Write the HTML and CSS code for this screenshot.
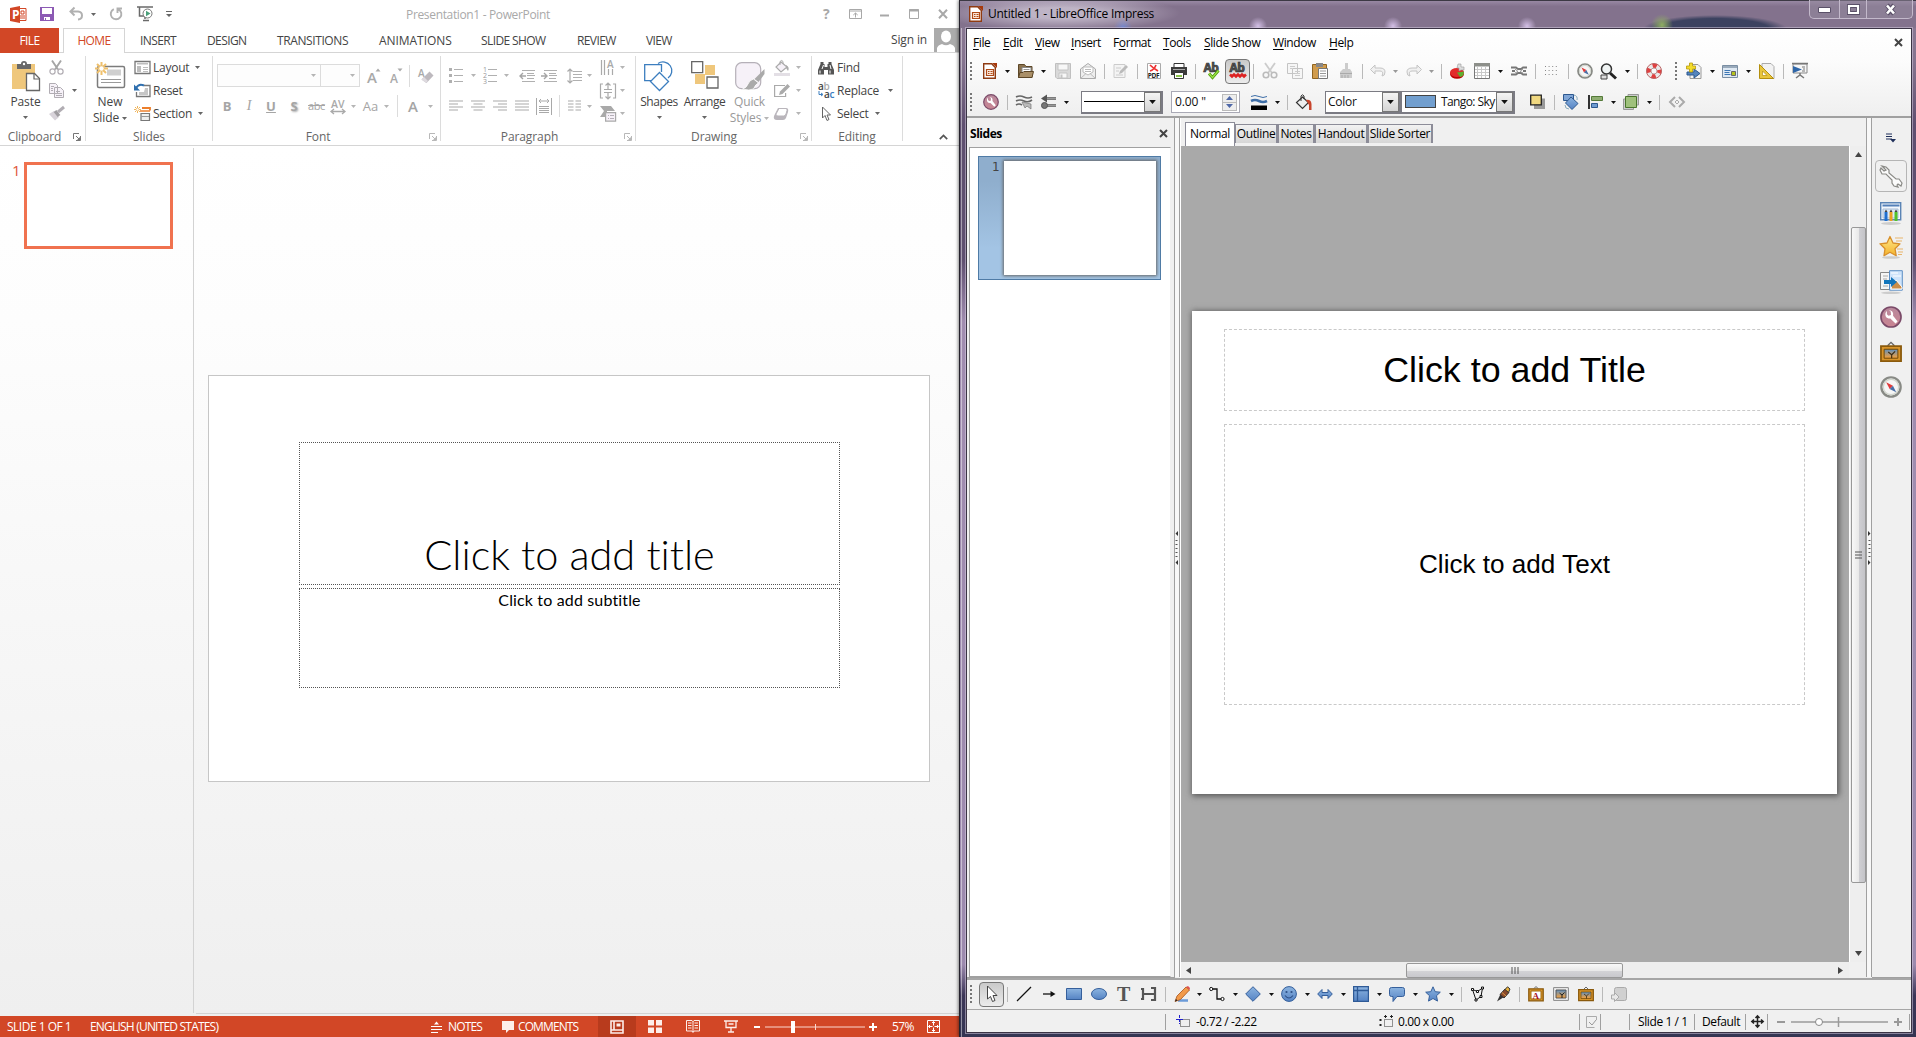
FILE: index.html
```html
<!DOCTYPE html>
<html lang="en">
<head>
<meta charset="utf-8">
<title>Presentation editors</title>
<link rel="stylesheet" href="styles.css">
</head>
<body>
<svg class="defs" width="0" height="0">
  <defs>
    <linearGradient id="blue" x1="0" y1="0" x2="0" y2="1"><stop offset="0" stop-color="#8cb4e0"/><stop offset="1" stop-color="#5583c4"/></linearGradient>
    <linearGradient id="sky" x1="0" y1="0" x2="0" y2="1"><stop offset="0" stop-color="#5d8fc0"/><stop offset="1" stop-color="#f8a13a"/></linearGradient>
    <linearGradient id="gold" x1="0" y1="0" x2="0" y2="1"><stop offset="0" stop-color="#ffe98a"/><stop offset="1" stop-color="#f4b22c"/></linearGradient>
    <linearGradient id="rose" x1="0" y1="0" x2="0" y2="1"><stop offset="0" stop-color="#b98a9d"/><stop offset="1" stop-color="#c98492"/></linearGradient>
    <symbol id="dd" viewBox="0 0 5 3"><path d="M0 0h5L2.500 3z" fill="currentColor"/></symbol>
    <symbol id="launch" viewBox="0 0 8 8"><path d="M.5 6V.5H6M7.500 3v4.500H3M3 3l4 4" fill="none" stroke="currentColor"/><path d="M7 4v3H4z" fill="currentColor"/></symbol>
    <symbol id="impress" viewBox="0 0 16 16"><path d="M1.700 .8h8l3.600 3.700v10.700H1.700z" fill="#fff" stroke="#8f3b12" stroke-width="1.400"/><path d="M10 0h5v5z" fill="#a6380b"/><path d="M4.500 6.500h7v6h-7z" fill="#fbe6d8" stroke="#b04a17" stroke-width="1.200"/><path d="M6 8.500h1.500M8.500 8.500h2M6 10.500h1.500M8.500 10.500h2" stroke="#b04a17"/></symbol>
    <symbol id="wrenchball" viewBox="0 0 16 16"><circle cx="8" cy="8" r="7.300" fill="url(#rose)" stroke="#7a4a68" stroke-width="1.200"/><path d="M5 3.500v2.500l1.200 1L8 6.500 7.800 4 6.500 3.300C8.500 2.800 10 4.500 9.500 7l3.300 4.300-1.500 1.500L7.500 9C5 9.300 3.500 7.500 4 5z" fill="#fff"/></symbol>
    <symbol id="compass" viewBox="0 0 16 16"><circle cx="8" cy="8" r="7" fill="#f6f6f6" stroke="#888a85" stroke-width="1.700"/><circle cx="8" cy="8" r="5.600" fill="none" stroke="#d3d7cf"/><path d="M4.500 4.500L9.400 7 7 9.400z" fill="#e03a3a"/><path d="M11.800 11.800L7 9.400 9.400 7z" fill="#4a6ea5"/></symbol>
    <symbol id="frame" viewBox="0 0 16 16"><path d="M5.500 3.500L8 1l2.500 2.500" fill="none" stroke="#666"/><path d="M.7 3.700h14.600v11H.7z" fill="#d8942a" stroke="#8a5a0c" stroke-width="1.300"/><path d="M3 6h10v6.500H3z" fill="url(#sky)" stroke="#6b4708" stroke-width=".7"/><path d="M8.500 12.500V10L6 8M8.500 10L11 7.500" stroke="#3a2a10" stroke-width=".8" fill="none"/></symbol>
  </defs>
</svg>
<div class="desktop">

<!-- ===== PowerPoint ===== -->
<section class="ppt">
  <header class="p-title">
    <div class="p-quick">
      <svg width="17" height="17" viewBox="0 0 17 17"><path d="M8 2.500h8v12H8z" fill="#fff" stroke="#d24726"/><path d="M11 5h3v3h-3zM10 10h5M10 12h5" fill="none" stroke="#d24726"/><path d="M0 2l10-2v17L0 15z" fill="#d24726"/><text x="2" y="12.500" class="g-p">P</text></svg>
      <svg width="14" height="14" viewBox="0 0 14 14"><path d="M0 0h14v14H0z" fill="#8c5ab4"/><path d="M2 1h10v6H2zM4 10h6v3H6v-2H5v2H4z" fill="#fff"/></svg>
      <svg width="14" height="14" viewBox="0 0 14 14"><path d="M5.500 .5L1.500 4.500l4 4M1.500 4.500H9q4 .3 4 4t-4 4" fill="none" stroke="#b1b1b1" stroke-width="2"/></svg>
      <svg class="dd c-gray" width="5" height="3"><use href="#dd"/></svg>
      <svg width="14" height="14" viewBox="0 0 14 14"><path d="M4.800 2.200A5.300 5.300 0 1 0 9.500 2.300M8.500 6V1.500H13" fill="none" stroke="#b1b1b1" stroke-width="1.900"/></svg>
      <svg width="17" height="16" viewBox="0 0 17 16"><path d="M0 1h16M2.500 1v9h5M6 14.500h6M8 13v-2" fill="none" stroke="#6a6a6a" stroke-width="1.500"/><circle cx="10.500" cy="7.500" r="4.500" fill="#fff" stroke="#777"/><path d="M9 4.800l4.500 2.700L9 10.200z" fill="#4ba07a"/></svg>
      <svg width="6" height="7" viewBox="0 0 6 7"><path d="M0 .5h6" stroke="#666"/><path d="M0 3h6L3 6z" fill="#666"/></svg>
    </div>
    <div class="p-caption">Presentation1 - PowerPoint</div>
    <div class="p-winbtns">
      <b class="q">?</b>
      <svg width="13" height="10" viewBox="0 0 13 10"><path d="M.5 .5h12v9H.5zM.5 2h12M6.500 8.500V4M4.300 6l2.200-2 2.200 2" fill="none" stroke="#a8a8a8"/></svg>
      <svg width="9" height="10" viewBox="0 0 9 10"><path d="M0 6.500h9" stroke="#a8a8a8" stroke-width="2"/></svg>
      <svg width="10" height="10" viewBox="0 0 10 10"><path d="M.5 .5h9v9h-9z" fill="none" stroke="#a8a8a8"/><path d="M0 1.500h10" stroke="#a8a8a8" stroke-width="2"/></svg>
      <svg width="10" height="10" viewBox="0 0 10 10"><path d="M1 .8l8 8.400M9 .8L1 9.200" stroke="#a8a8a8" stroke-width="2"/></svg>
    </div>
  </header>
  <nav class="p-tabs">
    <span class="file">FILE</span><span class="home">HOME</span>
    <div class="p-tablist"><span>INSERT</span><span>DESIGN</span><span class="wide">TRANSITIONS</span><span class="wider">ANIMATIONS</span><span>SLIDE SHOW</span><span>REVIEW</span><span>VIEW</span></div>
    <span class="signin">Sign in</span>
    <svg class="avatar" width="25" height="24" viewBox="0 0 25 24"><path d="M0 0h25v24H0z" fill="#ababab"/><ellipse cx="12" cy="8.500" rx="5" ry="6" fill="#fff"/><path d="M3 24v-4q1-3 5-4 4 2.500 8 0 4 1 5 4v4z" fill="#fff"/></svg>
  </nav>
  <div class="ribbon">
    <div class="grp g-clip">
      <div class="body">
        <div class="big">
          <svg width="30" height="30" viewBox="0 0 30 30"><path d="M1 3h23v25H1z" fill="#efc77c"/><path d="M6 8V3h4q0-3 3-3t3 3h4v5z" fill="#686868"/><circle cx="13" cy="3" r="1.200" fill="#fff"/><path d="M15.500 12.500h8l5 5v12h-13z" fill="#fff" stroke="#666" stroke-width="1.300"/><path d="M23 12.500v5.500h5.500" fill="none" stroke="#666" stroke-width="1.200"/></svg>
          <span>Paste</span><svg class="dd" width="5" height="3"><use href="#dd"/></svg>
        </div>
        <div class="smalls">
          <div><svg width="15" height="15" viewBox="0 0 15 15"><path d="M3 .5l6 9M12 .5l-6 9" stroke="#a5a5a5" stroke-width="1.900"/><circle cx="3.500" cy="11.500" r="2.600" fill="none" stroke="#b1adb3" stroke-width="1.200"/><circle cx="11.500" cy="11.500" r="2.600" fill="none" stroke="#b1adb3" stroke-width="1.200"/></svg></div>
          <div><svg width="15" height="15" viewBox="0 0 15 15"><path d="M.5 .5h6l2 2v8h-8zM5.500 4.500h6l3 3v7h-9z" fill="#f6f1f8" stroke="#b1adb3"/><path d="M2 3.500h3M2 5.500h2M2 7.500h2M7 8.500h4M7 10.500h6M7 12.500h6" stroke="#b1adb3"/></svg><svg class="dd c-gray" width="5" height="3"><use href="#dd"/></svg></div>
          <div><svg width="16" height="15" viewBox="0 0 16 15"><path d="M0 8l5-3 5 6-4 3.500z" fill="#d8d3da"/><path d="M6 5l4 5" stroke="#a09da1" stroke-width="3.500"/><path d="M9 6l6-5" stroke="#b1adb3" stroke-width="3"/></svg></div>
        </div>
      </div>
      <footer><span>Clipboard</span><svg class="launch" width="8" height="8"><use href="#launch"/></svg></footer>
    </div>
    <div class="grp g-slides">
      <div class="body">
        <div class="big">
          <svg width="32" height="30" viewBox="0 0 32 30"><rect x="3.500" y="5.500" width="27" height="21" rx="1.500" fill="#fff" stroke="#7c7c7c" stroke-width="1.500"/><path d="M13 8.500h14v6H13z" fill="#cfcfcf"/><path d="M7 18.500h20M7 21.500h20M7 8h2" stroke="#9a9a9a"/><path d="M7.500 1v13M1 7.500h13M3 3l9 9M12 3l-9 9" stroke="#efc06c" stroke-width="2"/><circle cx="7.500" cy="7.500" r="2.200" fill="#fff"/></svg>
          <span>New</span><span class="ddl">Slide <svg class="dd" width="5" height="3"><use href="#dd"/></svg></span>
        </div>
        <div class="smalls lab">
          <div><svg width="17" height="15" viewBox="0 0 17 15"><path d="M1 1.500h15v12H1z" fill="#fff" stroke="#777" stroke-width="1.300"/><path d="M3 3h11v1.500H3zM3 6h4v6H3z" fill="#bdbdbd"/><path d="M9 7.500h5M9 9.500h5M9 11.500h5" stroke="#bdbdbd"/></svg><span>Layout</span><svg class="dd" width="5" height="3"><use href="#dd"/></svg></div>
          <div><svg width="17" height="15" viewBox="0 0 17 15"><path d="M10 2.500h6v11H2.500V9" fill="none" stroke="#777" stroke-width="1.300"/><path d="M11 5h3v7H5V9h5z" fill="#c6c6c6"/><path d="M0 1.500v6h6z" fill="#2f6fae"/><path d="M2 5q3-5 8-2.500" fill="none" stroke="#2f6fae" stroke-width="2"/></svg><span>Reset</span></div>
          <div><svg width="17" height="16" viewBox="0 0 17 16"><path d="M8 2h8v2.500" fill="none" stroke="#ec7f2c" stroke-width="1.800"/><path d="M6 5h10" stroke="#ec7f2c" stroke-width="1.500"/><path d="M7 7.500h8.500v7H7z" fill="#eee" stroke="#777" stroke-width="1.200"/><path d="M7 10.500h8" stroke="#999"/><path d="M3.500 0v7M0 3.500h7M1 1l5 5M6 1L1 6" stroke="#efb55c"/><circle cx="3.500" cy="3.500" r="1.200" fill="#fff"/></svg><span>Section</span><svg class="dd" width="5" height="3"><use href="#dd"/></svg></div>
        </div>
      </div>
      <footer><span>Slides</span></footer>
    </div>
    <div class="grp g-font">
      <div class="rows">
        <div class="frow1">
          <span class="pcombo"><svg class="dd" width="5" height="3"><use href="#dd"/></svg></span><span class="pcombo"><svg class="dd" width="5" height="3"><use href="#dd"/></svg></span>
          <svg width="14" height="16" viewBox="0 0 14 16"><text x="0" y="14.500" class="g-a16">A</text><path d="M8.500 3.500h5L11 .5z" fill="#aaa"/></svg>
          <svg width="14" height="16" viewBox="0 0 14 16"><text x="0" y="14.500" class="g-a13">A</text><path d="M7.500 .5h5L10 3.500z" fill="#aaa"/></svg>
          <i class="vs"></i>
          <svg width="16" height="16" viewBox="0 0 16 16"><text x="0" y="9" class="g-a11">A</text><path d="M3.500 11.500l8-8 4 4-7 7.500z" fill="#bdb9be"/><path d="M3.500 11.500l2.500-2.500 4 4-2 2z" fill="#dedadf"/></svg>
        </div>
        <div class="frow2">
          <b>B</b><em>I</em><b class="u">U</b><b class="sh">S</b><span class="st">abc</span>
          <svg width="17" height="17" viewBox="0 0 17 17"><text x="1" y="10" class="g-av">AV</text><path d="M1 13.500h14M4 11l-3 2.500L4 16M12 11l3 2.500-3 2.500" fill="none" stroke="#aaa" stroke-width="1.300"/></svg>
          <svg class="dd" width="5" height="3"><use href="#dd"/></svg><span class="aa">Aa</span><svg class="dd" width="5" height="3"><use href="#dd"/></svg><i class="vs"></i><b class="fa">A</b><svg class="dd" width="5" height="3"><use href="#dd"/></svg>
        </div>
      </div>
      <footer><span>Font</span><svg class="launch c-lgray" width="8" height="8"><use href="#launch"/></svg></footer>
    </div>
    <div class="grp g-para">
      <div class="body">
        <div class="rows">
          <div class="prow1">
            <svg width="14" height="15" viewBox="0 0 14 15"><path d="M5 1.500h9M5 7.500h9M5 13.500h9" stroke="#b0b0b0"/><path d="M0 0h3v3H0zM0 6h3v3H0zM0 12h3v3H0z" fill="#b0b0b0"/></svg><svg class="dd" width="5" height="3"><use href="#dd"/></svg>
            <svg width="14" height="17" viewBox="0 0 14 17"><path d="M5 2.500h9M5 8.500h9M5 14.500h9" stroke="#b0b0b0"/><text x="0" y="5" class="g-n">1</text><text x="0" y="11" class="g-n">2</text><text x="0" y="17" class="g-n">3</text></svg><svg class="dd" width="5" height="3"><use href="#dd"/></svg>
            <svg width="16" height="12" viewBox="0 0 16 12"><path d="M3 .5h13M8 3.500h7M8 5.500h8M8 8.500h7M3 11.500h13" stroke="#b0b0b0"/><path d="M7 6H1M4 3L1 6l3 3" fill="none" stroke="#a5a5a5" stroke-width="1.400"/></svg>
            <svg width="16" height="12" viewBox="0 0 16 12"><path d="M3 .5h13M8 3.500h7M8 5.500h8M8 8.500h7M3 11.500h13" stroke="#b0b0b0"/><path d="M0 6h6M3 3l3 3-3 3" fill="none" stroke="#a5a5a5" stroke-width="1.400"/></svg>
            <svg width="15" height="16" viewBox="0 0 15 16"><path d="M6 3.500h9M6 6.500h9M6 9.500h9M6 12.500h9" stroke="#b0b0b0"/><path d="M3 1v14M.5 3.500L3 1l2.500 2.500M.5 12.500L3 15l2.500-2.500" fill="none" stroke="#aaa" stroke-width="1.200"/></svg><svg class="dd" width="5" height="3"><use href="#dd"/></svg>
          </div>
          <div class="prow2">
            <svg width="14" height="12" viewBox="0 0 14 12"><path d="M0 1h14M0 4h9M0 7h14M0 10h9" stroke="#a9a9a9" stroke-width="1.200"/></svg>
            <svg width="14" height="12" viewBox="0 0 14 12"><path d="M0 1h14M2.500 4h9M0 7h14M2.500 10h9" stroke="#a9a9a9" stroke-width="1.200"/></svg>
            <svg width="14" height="12" viewBox="0 0 14 12"><path d="M0 1h14M5 4h9M0 7h14M5 10h9" stroke="#a9a9a9" stroke-width="1.200"/></svg>
            <svg width="14" height="12" viewBox="0 0 14 12"><path d="M0 1h14M0 4h14M0 7h14M0 10h14" stroke="#a9a9a9" stroke-width="1.200"/></svg>
            <svg width="16" height="17" viewBox="0 0 16 17"><path d="M.5 0v17M15.500 0v17M3 8.500h10M3 10.500h10M3 12.500h10M3 14.500h10" stroke="#a9a9a9"/><path d="M3 3h10M5 1L3 3l2 2M11 1l2 2-2 2" fill="none" stroke="#a9a9a9"/></svg>
            <i class="vs"></i>
            <svg width="13" height="12" viewBox="0 0 13 12"><path d="M0 1h5.500M0 4h5.500M0 7h5.500M0 10h5.500M7.500 1H13M7.500 4H13M7.500 7H13M7.500 10H13" stroke="#a9a9a9" stroke-width="1.200"/></svg><svg class="dd" width="5" height="3"><use href="#dd"/></svg>
          </div>
        </div>
        <div class="smalls dis">
          <div><svg width="16" height="17" viewBox="0 0 16 17"><path d="M1.500 1v15M4.500 1v15M8.500 10v6M12.500 10v6" stroke="#aaa" stroke-width="1.200"/><text x="7" y="9" class="g-a11">A</text></svg><svg class="dd" width="5" height="3"><use href="#dd"/></svg></div>
          <div><svg width="16" height="16" viewBox="0 0 16 16"><path d="M3 1H.5v14H3M13 1h2.500v14H13M4 6.500h8M4 9.500h8M8 6V0M5.500 2.500L8 0l2.500 2.500M8 10v6M5.500 13.500L8 16l2.500-2.500" fill="none" stroke="#aaa" stroke-width="1.200"/></svg><svg class="dd" width="5" height="3"><use href="#dd"/></svg></div>
          <div><svg width="17" height="17" viewBox="0 0 17 17"><path d="M0 1h11l4 5H7v6H0l4-6z" fill="#a9a9a9"/><path d="M5.600 7.600h10v8.500h-10z" fill="#f6f1f8" stroke="#a9a9a9" stroke-width="1.200"/><path d="M8 10.500h1M10 10.500h4M8 13.500h1M10 13.500h4" stroke="#b5b0b8"/></svg><svg class="dd" width="5" height="3"><use href="#dd"/></svg></div>
        </div>
      </div>
      <footer><span>Paragraph</span><svg class="launch c-lgray" width="8" height="8"><use href="#launch"/></svg></footer>
    </div>
    <div class="grp g-draw">
      <div class="body">
        <div class="big">
          <svg width="30" height="30" viewBox="0 0 30 30"><path d="M14 2.500A8.500 8.500 0 1 1 24 17" fill="none" stroke="#3c7ebf" stroke-width="1.300"/><path d="M17.500 11V3.700H.7v16h7" fill="none" stroke="#3c7ebf" stroke-width="1.300"/><path d="M15.500 11.500l9 9-9 9-9-9z" fill="#fff" stroke="#3c7ebf" stroke-width="1.300"/></svg>
          <span>Shapes</span><svg class="dd" width="5" height="3"><use href="#dd"/></svg>
        </div>
        <div class="big">
          <svg width="28" height="30" viewBox="0 0 28 30"><path d="M14 4h10v10H14zM4 13h10v10H4z" fill="#efc77c"/><path d="M.7 .7h11v11H.7zM16 16h11v11H16z" fill="#fff" stroke="#666" stroke-width="1.300"/></svg>
          <span>Arrange</span><svg class="dd" width="5" height="3"><use href="#dd"/></svg>
        </div>
        <div class="big off">
          <svg width="30" height="30" viewBox="0 0 30 30"><rect x=".7" y="1.700" width="25" height="26" rx="6" fill="#f6f1f8" stroke="#b5b0b8" stroke-width="1.200"/><path d="M29.500 8v5l-6 8-4-3z" fill="#aaa"/><path d="M18.500 18l5 4q-3 1-5 6-4 2-11 0 4-1 5.500-5t5.500-5z" fill="#aaa" stroke="#fff" stroke-width=".8"/></svg>
          <span>Quick</span><span class="ddl">Styles <svg class="dd" width="5" height="3"><use href="#dd"/></svg></span>
        </div>
        <div class="smalls dis">
          <div><svg width="17" height="16" viewBox="0 0 17 16"><path d="M7 2l6 5-6 5-5-5z" fill="#f6f1f8" stroke="#aaa" stroke-width="1.200"/><path d="M6 5V1.500q2-2 3 0V4" fill="none" stroke="#aaa"/><path d="M12 5q4 2 2 6l-2-3z" fill="#aaa"/><path d="M0 13h16v3H0z" fill="#e3dfe5"/></svg><svg class="dd" width="5" height="3"><use href="#dd"/></svg></div>
          <div><svg width="17" height="16" viewBox="0 0 17 16"><path d="M11 2.500H.6v11h11V10" fill="none" stroke="#aaa" stroke-width="1.200"/><path d="M13.500 1l2.500 2.500-7.500 7.500-3.500 1 1-3.500z" fill="#aaa"/></svg><svg class="dd" width="5" height="3"><use href="#dd"/></svg></div>
          <div><svg width="15" height="14" viewBox="0 0 15 14"><path d="M4 1h8q3 0 2 4l-2 6q-1 2-3 2H3q-4 0-3-4z" fill="#b9b5bb"/><path d="M5 1.500h7q1.500 0 1 2L12 7q-.5 2-2.500 2H4Q1.500 9 2 7z" fill="#fff" stroke="#b9b5bb"/></svg><svg class="dd" width="5" height="3"><use href="#dd"/></svg></div>
        </div>
      </div>
      <footer><span>Drawing</span><svg class="launch c-lgray" width="8" height="8"><use href="#launch"/></svg></footer>
    </div>
    <div class="grp g-edit">
      <div class="smalls lab">
        <div><svg width="16" height="14" viewBox="0 0 16 14"><path d="M2.500 1h3v2h1V6h3V3h1V1h3v2l2.500 6v4.500h-6V9h-4v4.500H0V9l2.500-6z" fill="#555"/><path d="M2 9.500v3M12 9.500v3M5.500 4l-1.500 4M12 4l1 4" stroke="#fff"/></svg><span>Find</span></div>
        <div><svg width="17" height="17" viewBox="0 0 17 17"><text x="0" y="7.500" class="g-ab">a<tspan fill="#aaa">b</tspan></text><text x="6" y="15.500" class="g-ab">a<tspan fill="#3c7ebf">c</tspan></text><path d="M1 9v3.500h3.500M3 11l2 1.500-2 1.500" fill="none" stroke="#3c7ebf"/></svg><span>Replace</span><svg class="dd far" width="5" height="3"><use href="#dd"/></svg></div>
        <div><svg width="16" height="15" viewBox="0 0 16 15"><path d="M4.500 1v11l2.500-2.500 2 5 2-1-2-4.500h3.500z" fill="#fff" stroke="#666"/></svg><span>Select</span><svg class="dd" width="5" height="3"><use href="#dd"/></svg></div>
      </div>
      <footer><span>Editing</span></footer>
    </div>
    <svg class="fold" width="9" height="6" viewBox="0 0 9 6"><path d="M.8 5.200L4.500 1.500l3.700 3.700" fill="none" stroke="#555" stroke-width="1.700"/></svg>
  </div>
  <main class="p-work">
    <aside class="p-thumbs"><span>1</span><div class="p-thumb"></div></aside>
    <div class="p-stage">
      <div class="p-slide">
        <div class="ph p-h">Click to add title</div>
        <div class="ph p-s">Click to add subtitle</div>
      </div>
    </div>
  </main>
  <footer class="p-status">
    <span class="t1">SLIDE 1 OF 1</span><span class="t2">ENGLISH (UNITED STATES)</span>
    <svg width="12" height="12" viewBox="0 0 12 12"><path d="M0 5.500h11M0 8.500h11M0 11.500h7" stroke="#fff"/><path d="M3 3.500h5L5.500 .5z" fill="#fff"/></svg><span class="t3">NOTES</span>
    <svg width="12" height="12" viewBox="0 0 12 12"><path d="M0 0h12v9H7l-3 3V9H0z" fill="#fdeeea"/></svg><span class="t4">COMMENTS</span>
    <span class="act"><svg width="14" height="14" viewBox="0 0 14 14"><path d="M1 1h12v12H1zM1 10h12M4 1v9" fill="none" stroke="#fdeeea" stroke-width="1.600"/><path d="M6.500 3.500h4v3h-4z" fill="#fdeeea"/></svg></span>
    <svg width="14" height="13" viewBox="0 0 14 13"><path d="M0 0h6v5.500H0zM8 0h6v5.500H8zM0 7.500h6V13H0zM8 7.500h6V13H8z" fill="#fdeeea"/></svg>
    <svg width="14" height="13" viewBox="0 0 14 13"><path d="M.5 .5H6l1 1 1-1h5.500V11H8l-1 1.500L6 11H.5zM7 1v11M2 3h3.500M2 5.500h3.500M2 8h3.500M8.500 3H12M8.500 5.500H12M8.500 8H12" fill="none" stroke="#fdeeea"/></svg>
    <svg width="14" height="13" viewBox="0 0 14 13"><path d="M0 1h14M2 1v6.500h10V1M4.500 4h5M7 8v4M4 12h6" fill="none" stroke="#fdeeea" stroke-width="1.300"/></svg>
    <svg width="124" height="14" viewBox="0 0 124 14"><path d="M0 7h6M115 7h8M119 3v8" stroke="#fff" stroke-width="2"/><path d="M11 7h100M61.500 4v6" stroke="#fbd9d0"/><path d="M37 1h4v12h-4z" fill="#fff"/></svg>
    <span class="t5">57%</span>
    <svg width="13" height="13" viewBox="0 0 13 13"><path d="M.5 .5h12v12H.5z" fill="none" stroke="#fff"/><path d="M6.500 1.500v4M6.500 7.500v4M1.500 6.500h4M7.500 6.500h4M5 3l1.500-1.500L8 3M5 10l1.500 1.500L8 10M3 5L1.500 6.500 3 8M10 5l1.500 1.500L10 8" fill="none" stroke="#fff"/></svg>
  </footer>
</section>

<!-- ===== LibreOffice Impress ===== -->
<section class="lo">
  <header class="l-title">
    <svg width="16" height="16"><use href="#impress"/></svg><span>Untitled 1 - LibreOffice Impress</span>
    <div class="l-btns">
      <i><svg width="13" height="6" viewBox="0 0 13 6"><path d="M.5 .5h12v5H.5z" fill="#fff" stroke="#5a5068"/></svg></i>
      <i><svg width="13" height="11" viewBox="0 0 13 11"><path d="M2 2h9v7H2z" fill="none" stroke="#5a5068" stroke-width="4"/><path d="M2 2h9v7H2z" fill="none" stroke="#fff" stroke-width="2.200"/></svg></i>
      <i><svg width="13" height="11" viewBox="0 0 13 11"><path d="M3 1l7 9M10 1L3 10" stroke="#5a5068" stroke-width="4.500"/><path d="M3 1.500l7 8M10 1.500l-7 8" stroke="#fff" stroke-width="2.600"/></svg></i>
    </div>
  </header>
  <div class="client">
    <div class="l-top">
      <nav class="l-menu"><span><u>F</u>ile</span><span><u>E</u>dit</span><span><u>V</u>iew</span><span><u>I</u>nsert</span><span>F<u>o</u>rmat</span><span><u>T</u>ools</span><span><u>S</u>lide Show</span><span><u>W</u>indow</span><span><u>H</u>elp</span><svg width="9" height="9" viewBox="0 0 9 9"><path d="M1 1l7 7M8 1L1 8" stroke="#444" stroke-width="2"/></svg></nav>
      <div class="tb tb1">
        <i class="grip"></i>
        <svg width="16" height="16"><use href="#impress"/></svg><svg class="dd" width="5" height="3"><use href="#dd"/></svg>
        <svg width="16" height="16" viewBox="0 0 16 16"><path d="M.5 1.500h6l1.500 2h6v11H.5z" fill="#8b7350" stroke="#5d4727"/><path d="M4 4.500h9v6H4z" fill="#fff" stroke="#888"/><path d="M5.500 6.500h6M5.500 8.500h6" stroke="#999"/><path d="M.5 14.500l1.500-5h3l1-1h9.500l-1.500 6z" fill="#a98f68" stroke="#5d4727"/></svg><svg class="dd" width="5" height="3"><use href="#dd"/></svg>
        <svg width="16" height="16" viewBox="0 0 16 16"><path d="M.5 .5h15v15H2l-1.500-1.500z" fill="#d9d9d9" stroke="#c0c0c0"/><path d="M3 1h10v6H3zM4 10h8v5H4z" fill="#f7f7f7" stroke="#c4c4c4"/><path d="M5.500 11.500h2V15h-2z" fill="#c4c4c4"/></svg>
        <svg width="16" height="16" viewBox="0 0 16 16"><path d="M.5 6L8 .5 15.500 6v9.500H.5z" fill="#eee" stroke="#aaa"/><path d="M3 4h10v5l-5 3-5-3z" fill="#fff" stroke="#bbb"/><path d="M.5 15.500L6 10.500M15.500 15.500l-5.500-5M5 6.500h6M5 8.500h6" stroke="#bbb"/></svg>
        <i class="sep"></i>
        <svg width="16" height="16" viewBox="0 0 16 16"><path d="M1 1.500h11v13H1z" fill="#f4f4f4" stroke="#ccc"/><path d="M3 5h5M3 8h3M3 12h7" stroke="#ccc"/><path d="M13 2l2 2-6 6-3 1 1-3z" fill="#bbb"/></svg>
        <i class="sep"></i>
        <svg width="16" height="16" viewBox="0 0 16 16"><path d="M1.500 .5h13v15h-13z" fill="#fff" stroke="#aaa"/><path d="M4 2q3 3 8 6M10 2q-2 5-6 6" stroke="#e33" stroke-width="1.700" fill="none"/><text x="1.800" y="14.500" class="g-pdf">PDF</text></svg>
        <svg width="16" height="16" viewBox="0 0 16 16"><path d="M3 .5h10v4H3z" fill="#fff" stroke="#333"/><path d="M0 4h16v8H0z" fill="#3c3c3c"/><path d="M2 6h12v1H2z" fill="#aaa"/><path d="M3.500 9.500h9v6h-9z" fill="#fff" stroke="#333"/><path d="M5 13h6" stroke="#8bc34a" stroke-width="2"/></svg>
        <i class="sep"></i>
        <svg width="16" height="16" viewBox="0 0 16 16"><text x="-.5" y="9" class="g-abc">Ab</text><path d="M5 10.500l3.500 4 6-7" fill="none" stroke="#4e9a06" stroke-width="2.800"/><path d="M5 10.500l3.500 4 6-7" fill="none" stroke="#9be04a" stroke-width="1.200"/></svg>
        <span class="pressed"><svg width="16" height="16" viewBox="0 0 16 16"><text x="-.5" y="9" class="g-abc">Ab</text><path d="M0 11.500l2 2 2-2 2 2 2-2 2 2 2-2 2 2 2-2" fill="none" stroke="#d22" stroke-width="2.500"/></svg></span>
        <i class="sep"></i>
        <svg width="16" height="16" viewBox="0 0 16 16"><path d="M3 0l7 10M13 0L6 10" stroke="#ccc" stroke-width="1.800"/><circle cx="4" cy="12" r="2.800" fill="none" stroke="#bbb" stroke-width="1.600"/><circle cx="12" cy="12" r="2.800" fill="none" stroke="#bbb" stroke-width="1.600"/></svg>
        <svg width="16" height="16" viewBox="0 0 16 16"><path d="M.5 .5h10v10H.5zM5.500 5.500h10v10h-10z" fill="#f6f6f6" stroke="#c4c4c4"/><path d="M3 3.500h5M3 5.500h2M8 8.500h5M8 10.500h5M8 12.500h5" stroke="#ccc"/></svg>
        <svg width="16" height="16" viewBox="0 0 16 16"><path d="M.5 1.500h14v14H.5z" fill="#d19c4c" stroke="#8f6420"/><path d="M4 0h7v4H4z" fill="#888"/><path d="M6.500 5.500h9v10h-9z" fill="#fff" stroke="#777"/><path d="M8 8h6M8 10.500h6M8 13h6" stroke="#999"/></svg>
        <svg width="16" height="16" viewBox="0 0 16 16"><path d="M7 0h3v6h2l2 3v6H2V9l3-3h2z" fill="#ccc"/><path d="M2 10.500h12M4 12v3M7 12v3M10 12v3" stroke="#aaa"/></svg>
        <i class="sep"></i>
        <svg width="16" height="16" viewBox="0 0 16 16"><path d="M5 2v3h5q5 0 5 4t-3 4q2-5-2-5H5v3L.5 6.500z" fill="#f0f0f0" stroke="#c4c4c4"/></svg><svg class="dd c-mid" width="5" height="3"><use href="#dd"/></svg>
        <svg width="16" height="16" viewBox="0 0 16 16"><path d="M11 2v3H6Q1 5 1 9t3 4q-2-5 2-5h5v3l4.500-4.500z" fill="#f0f0f0" stroke="#c4c4c4"/></svg><svg class="dd c-mid" width="5" height="3"><use href="#dd"/></svg>
        <i class="sep"></i>
        <svg width="16" height="16" viewBox="0 0 16 16"><ellipse cx="7" cy="11" rx="7" ry="4.800" fill="#b00"/><ellipse cx="7" cy="9.500" rx="7" ry="4.500" fill="#e22b2b"/><path d="M7 9.500l7-1q0 5-4 5.500z" fill="#5faf2f"/><path d="M8 1h3v3h3v3h-3l-2 1V5H7z" fill="#ddd" stroke="#999" stroke-width=".6"/></svg>
        <svg width="16" height="16" viewBox="0 0 16 16"><path d="M.5 .5h15v15H.5z" fill="#fff" stroke="#777"/><path d="M0 0h16v3.500H0z" fill="#8d8f8a"/><path d="M3.500 3v12M7.500 3v12M11.500 3v12M1 6.500h14M1 9.500h14M1 12.500h14" stroke="#c9c9c9"/></svg><svg class="dd" width="5" height="3"><use href="#dd"/></svg>
        <svg width="16" height="16" viewBox="0 0 16 16"><path d="M0 4.500h5l2 1.500h3l2-1.500h4M0 11.500h5l2-1.500h3l2 1.500h4M1 8h3M12 8h3" fill="none" stroke="#777" stroke-width="1.800"/><path d="M4 6l3 2.500L4 10M12 6L9 8.500l3 1.500" fill="none" stroke="#999"/></svg>
        <i class="sep"></i>
        <svg width="16" height="16" viewBox="0 0 16 16"><path d="M1 3.500h12M1 7.500h12M1 11.500h12" stroke="#888" stroke-dasharray="1 2.600"/></svg>
        <i class="sep"></i>
        <svg width="16" height="16"><use href="#compass"/></svg>
        <svg width="17" height="17" viewBox="0 0 17 17"><path d="M10 10l6 5.500" stroke="#222" stroke-width="3"/><circle cx="6.500" cy="6" r="5" fill="#f0f4f4" stroke="#333" stroke-width="1.500"/><path d="M1 12h6v4H1z" fill="#ddd" stroke="#444"/></svg><svg class="dd" width="5" height="3"><use href="#dd"/></svg>
        <i class="sep"></i>
        <svg width="16" height="16" viewBox="0 0 16 16"><circle cx="8" cy="8" r="5.300" fill="none" stroke="#e9e9e9" stroke-width="4.500"/><circle cx="8" cy="8" r="5.300" fill="none" stroke="#e04040" stroke-width="4.500" stroke-dasharray="4.160 4.160" stroke-dashoffset="2"/><circle cx="8" cy="8" r="7.500" fill="none" stroke="#b66"/><circle cx="8" cy="8" r="3" fill="none" stroke="#b99"/></svg>
        <i class="grip"></i>
        <svg width="16" height="16" viewBox="0 0 16 16"><path d="M4 1.500h8l3 3v11H4z" fill="#f4f4f4" stroke="#999"/><path d="M1 9h7V6l6 4.500L8 15v-3H1z" fill="#5585bd" stroke="#2d588f"/><path d="M3.500 0h3v3h3v3h-3v3h-3V6H.5V3h3z" fill="#f3dc2c" stroke="#b99b0b" stroke-width=".8"/></svg><svg class="dd" width="5" height="3"><use href="#dd"/></svg>
        <svg width="16" height="16" viewBox="0 0 16 16"><path d="M.5 2.500h15v12H.5z" fill="#dfe9f3" stroke="#7a8ea3"/><path d="M1 3h14v2H1z" fill="#9ab"/><path d="M2.500 7.500h6M2.500 9.500h5M2.500 11.500h6" stroke="#3c77b5"/><path d="M9.500 8.500h4v4h-4z" fill="#b5c31c" stroke="#666"/></svg><svg class="dd" width="5" height="3"><use href="#dd"/></svg>
        <svg width="16" height="16" viewBox="0 0 16 16"><path d="M3 .5h9l3 3v12H3z" fill="#f2f2f2" stroke="#aaa"/><path d="M.5 1.500v14h14z" fill="#e9c53a" stroke="#b48f0d"/><path d="M3.500 8v4.500H8z" fill="#fff" stroke="#b48f0d" stroke-width=".7"/></svg>
        <i class="sep"></i>
        <svg width="16" height="16" viewBox="0 0 16 16"><path d="M1 1h14v9H1z" fill="#f6f6f6" stroke="#888"/><path d="M0 .5h16M8 10v3M4 15l4-3 4 3" stroke="#777" stroke-width="1.500" fill="none"/><path d="M1 3l9 3.500L1 10z" fill="#2f66a8"/><path d="M10 4h3M11 6h2M10 8h3" stroke="#777"/></svg>
      </div>
      <div class="tb tb2">
        <i class="grip"></i>
        <svg width="16" height="16"><use href="#wrenchball"/></svg>
        <i class="sep"></i>
        <svg width="16" height="16" viewBox="0 0 16 16"><path d="M0 3q4-2 8 0t8 0M0 7q4-2 8 0t8-1M0 11q3-2 6 0" fill="none" stroke="#666" stroke-width="1.600"/><path d="M6 8l9 2v5l-4-3-2 2z" fill="#bbb" stroke="#777" stroke-width=".7"/></svg>
        <svg width="16" height="16" viewBox="0 0 16 16"><path d="M4 4.500h11M4 11.500h11" stroke="#555" stroke-width="2.600"/><path d="M4 4.500h11M4 11.500h11" stroke="#aaa" stroke-width=".8"/><path d="M6 .5v8L0 4.500z" fill="#555"/><circle cx="3.500" cy="11.500" r="3" fill="#777" stroke="#555"/></svg>
        <svg class="dd" width="5" height="3"><use href="#dd"/></svg>
        <span class="combo w82"><i class="ln"></i><em><svg class="dd" width="7" height="4"><use href="#dd"/></svg></em></span>
        <span class="spin"><span>0.00 "</span><em><svg width="7" height="4" viewBox="0 0 7 4"><path d="M0 4h7L3.500 0z" fill="#4f68a8"/></svg><svg width="7" height="4" viewBox="0 0 7 4"><path d="M0 0h7L3.500 4z" fill="#4f68a8"/></svg></em></span>
        <svg width="17" height="16" viewBox="0 0 17 16"><path d="M0 2.500q4-2 8 0t8 0" fill="none" stroke="#3f6fa8"/><path d="M0 7q4-2 8 0t8 0" fill="none" stroke="#3f6fa8" stroke-width="2.600"/><path d="M0 11.500h16V16H0z" fill="#000"/></svg>
        <svg class="dd" width="5" height="3"><use href="#dd"/></svg>
        <i class="sep"></i>
        <svg width="16" height="16" viewBox="0 0 16 16"><path d="M6.500 3l6 5.500-6 6-6-6z" fill="#eee" stroke="#333" stroke-width="1.200"/><path d="M5 7V2q1.500-2.500 3 0v3" fill="none" stroke="#333"/><path d="M10 6q5-1 5.500 4v6h-2.500v-5z" fill="#c8452c"/></svg>
        <span class="combo w76"><span>Color</span><em><svg class="dd" width="7" height="4"><use href="#dd"/></svg></em></span>
        <span class="combo w114"><b class="swatch"></b><span>Tango: Sky</span><em><svg class="dd" width="7" height="4"><use href="#dd"/></svg></em></span>
        <svg width="15" height="16" viewBox="0 0 15 16"><path d="M4 4.500h11V15H4z" fill="#999"/><path d="M.7 1.200h10.600v9.600H.7z" fill="#f0d880" stroke="#222" stroke-width="1.300"/></svg>
        <i class="sep"></i>
        <svg width="16" height="16" viewBox="0 0 16 16"><path d="M.5 .5h10v6H.5z" fill="#7fa5d6" stroke="#2d588f"/><path d="M8 3l7 6.500-6 6L2.500 9z" fill="url(#blue)" stroke="#2d588f"/><path d="M2 11q0 4 4 4M14 6q1-4-3-5" fill="none" stroke="#8ab" /></svg>
        <svg width="16" height="16" viewBox="0 0 16 16"><path d="M1 1v14" stroke="#000" stroke-width="1.600"/><path d="M3.500 2.500h11v4h-11z" fill="#8fae72" stroke="#557a3a"/><path d="M3.500 9.500h6v4h-6z" fill="#6f9bd0" stroke="#2d588f"/></svg>
        <svg class="dd" width="5" height="3"><use href="#dd"/></svg>
        <svg width="16" height="16" viewBox="0 0 16 16"><path d="M5 .5h10.500V11H5zM.5 5h10v10.500H.5z" fill="#ccc" stroke="#999"/><path d="M2.500 2.500h11v11h-11z" fill="#9fc17c" stroke="#49752c"/></svg>
        <svg class="dd" width="5" height="3"><use href="#dd"/></svg>
        <i class="sep"></i>
        <svg width="16" height="16" viewBox="0 0 16 16"><path d="M6 3L1 8l5 5M10 3l5 5-5 5" fill="none" stroke="#aaa" stroke-width="2"/><path d="M6 8l2-2 2 2-2 2z" fill="none" stroke="#aaa"/></svg>
      </div>
    </div>
    <div class="l-mid">
      <aside class="l-slides">
        <header><b>Slides</b><svg width="9" height="9" viewBox="0 0 9 9"><path d="M1 1l7 7M8 1L1 8" stroke="#444" stroke-width="2"/></svg></header>
        <div class="l-list"><div class="l-thumb"><span>1</span><div class="page"></div></div></div>
      </aside>
      <div class="split"><svg width="3" height="34" viewBox="0 0 3 34"><path d="M3 0v5L.5 2.500zM3 29v5L.5 31.500z" fill="#333"/><path d="M1.500 9v17" stroke="#555" stroke-width="2" stroke-dasharray="1 3"/></svg></div>
      <div class="l-center">
        <div class="l-tabs"><span class="on">Normal</span><span>Outline</span><span>Notes</span><span>Handout</span><span>Slide Sorter</span></div>
        <div class="l-canvas">
          <div class="l-slide"><div class="lh">Click to add Title</div><div class="lt">Click to add Text</div></div>
        </div>
        <div class="vsb"><svg width="7" height="5" viewBox="0 0 7 5"><path d="M0 5h7L3.500 0z" fill="#444"/></svg><i><svg width="7" height="8" viewBox="0 0 7 8"><path d="M0 1h7M0 4h7M0 7h7" stroke="#555"/></svg></i><svg class="end" width="7" height="5" viewBox="0 0 7 5"><path d="M0 0h7L3.500 5z" fill="#444"/></svg></div>
        <div class="hsb"><svg width="5" height="7" viewBox="0 0 5 7"><path d="M5 0v7L0 3.500z" fill="#444"/></svg><i><svg width="8" height="7" viewBox="0 0 8 7"><path d="M1 0v7M4 0v7M7 0v7" stroke="#555"/></svg></i><svg class="end" width="5" height="7" viewBox="0 0 5 7"><path d="M0 0v7l5-3.500z" fill="#444"/></svg></div>
      </div>
      <div class="split right"><svg width="3" height="34" viewBox="0 0 3 34"><path d="M0 0v5l2.500-2.500zM0 29v5l2.500-2.500z" fill="#333"/><path d="M1.500 9v17" stroke="#555" stroke-width="2" stroke-dasharray="1 3"/></svg></div>
      <aside class="l-deck">
        <svg class="dm" width="10" height="10" viewBox="0 0 10 10"><path d="M0 1h6M0 3.500h6M0 6h6" stroke="#1f2f5a"/><path d="M4 6h6L7 9.500z" fill="#1f2f5a"/></svg>
        <span class="dbtn"><svg width="24" height="24" viewBox="0 0 24 24"><path d="M3 2l4 1 3 3v3l7 6 3 0 3 4-1 3-3-2-1 1 1 2-4-1-2-3v-3l-6-6-4 0-2-4 1-2 3 3 2-1z" fill="#fbfbfb" stroke="#8a8a86" stroke-width="1.200"/></svg></span>
        <svg width="24" height="24" viewBox="0 0 24 24"><ellipse cx="12" cy="22.500" rx="10" ry="1.500" fill="#ccc"/><path d="M1.700 1.700h20v17h-20z" fill="#f4f8fd" stroke="#5b84b5" stroke-width="1.400"/><path d="M3.500 3.500h17v2h-17z" fill="#5580b8"/><path d="M4 8h15v9H4z" fill="#dde8f5" stroke="#a9bdd6"/><path d="M5.500 11h3v9h-3z" fill="#1f6fd0"/><path d="M10.500 11h3v9h-3z" fill="#eea020"/><path d="M15.500 11h3v9h-3z" fill="#53c22b"/><path d="M5.500 11L7 8.500 8.500 11zM10.500 11L12 8.500l1.500 2.500zM15.500 11L17 8.500l1.500 2.500z" fill="#444"/></svg>
        <svg width="24" height="24" viewBox="0 0 24 24"><ellipse cx="12" cy="22.500" rx="9" ry="1.300" fill="#ccc"/><path d="M16 3h8M17 6h6M18 14h6M19 17h5M19 19.500h4" stroke="#e8b56c"/><path d="M11 1.500l3 6.500 7 .8-5 4.900 1.200 7L11 17.300 5 20.700l1-7L1 8.800 8 8z" fill="url(#gold)" stroke="#d8902c" stroke-width="1.300" stroke-linejoin="round"/></svg>
        <svg width="24" height="24" viewBox="0 0 24 24"><ellipse cx="12" cy="22.800" rx="10" ry="1.200" fill="#ccc"/><path d="M1.500 2.500h13v17h-13z" fill="#f5f5f5" stroke="#888"/><path d="M4 6h5M4 9h4M4 16h5" stroke="#aaa"/><path d="M10.500 .7h12.800v19.500H10.500z" fill="#cfe4fb" stroke="#5d8fc4"/><path d="M12 3h7M14 6h8M13 14l4-4 6 7v2H12z" stroke="#fff" fill="#c98c48"/><path d="M5 10h7V7l6 5-6 5v-3H5z" fill="#1275bb"/></svg>
        <svg width="22" height="22"><use href="#wrenchball"/></svg>
        <svg width="22" height="22"><use href="#frame"/></svg>
        <svg width="22" height="22"><use href="#compass"/></svg>
      </aside>
    </div>
    <div class="tb tb3">
      <i class="grip"></i>
      <span class="pressed"><svg width="16" height="18" viewBox="0 0 16 18"><path d="M3.500 1v13l3-2.500 2 5 2.500-1-2-5h4z" fill="#fff" stroke="#444"/></svg></span>
      <i class="sep"></i>
      <svg width="16" height="16" viewBox="0 0 16 16"><path d="M1 15L15 1" stroke="#111" stroke-width="1.200"/></svg>
      <svg width="16" height="16" viewBox="0 0 16 16"><path d="M2 8h9" stroke="#111" stroke-width="1.300"/><path d="M9.500 5v6L14.500 8z" fill="#111"/></svg>
      <svg width="16" height="16" viewBox="0 0 16 16"><path d="M.5 2.500h15v11H.5z" fill="url(#blue)" stroke="#355f9b"/></svg>
      <svg width="16" height="16" viewBox="0 0 16 16"><ellipse cx="8" cy="8" rx="7.500" ry="5.500" fill="url(#blue)" stroke="#355f9b"/></svg>
      <svg width="16" height="16" viewBox="0 0 16 16"><text x="1" y="15" class="g-t">T</text></svg>
      <svg width="16" height="16" viewBox="0 0 16 16"><path d="M0 3h2v10H0M2 8h11M10 2h4v12h-4" fill="none" stroke="#555" stroke-width="2.200"/></svg>
      <i class="sep"></i>
      <svg width="16" height="16" viewBox="0 0 16 16"><path d="M4 14.500h10" stroke="#6b9bd8" stroke-width="2.500"/><path d="M12 1l3.500 3-9 9.500L1 15.500 3 10z" fill="#f29a4a" stroke="#a8541a" stroke-width=".8"/><path d="M12 1l3.500 3 .5-2-2-2z" fill="#e05050"/><path d="M1 15.500L2 13l1.500 1.500z" fill="#222"/></svg><svg class="dd" width="5" height="3"><use href="#dd"/></svg>
      <svg width="16" height="16" viewBox="0 0 16 16"><path d="M3 3h5v10h5" fill="none" stroke="#111" stroke-width="1.300"/><circle cx="2.200" cy="3" r="1.600" fill="#fff" stroke="#111"/><circle cx="13.500" cy="13" r="1.600" fill="#fff" stroke="#111"/></svg><svg class="dd" width="5" height="3"><use href="#dd"/></svg>
      <svg width="16" height="16" viewBox="0 0 16 16"><path d="M8 .7L15.300 8 8 15.300.7 8z" fill="url(#blue)" stroke="#355f9b"/></svg><svg class="dd" width="5" height="3"><use href="#dd"/></svg>
      <svg width="16" height="16" viewBox="0 0 16 16"><circle cx="8" cy="8" r="7.400" fill="url(#blue)" stroke="#355f9b"/><path d="M4 9.500q4 5 8 0" fill="none" stroke="#2d4f86" stroke-width="1.200"/><circle cx="5.500" cy="6" r="1.100" fill="#2d4f86"/><circle cx="10.500" cy="6" r="1.100" fill="#2d4f86"/></svg><svg class="dd" width="5" height="3"><use href="#dd"/></svg>
      <svg width="16" height="16" viewBox="0 0 16 16"><path d="M.7 8L5 3.500v3h6v-3L15.300 8 11 12.500v-3H5v3z" fill="url(#blue)" stroke="#355f9b"/></svg><svg class="dd" width="5" height="3"><use href="#dd"/></svg>
      <svg width="16" height="16" viewBox="0 0 16 16"><path d="M.6 .6h14.800v14.800H.6z" fill="url(#blue)" stroke="#2f5a96" stroke-width="1.200"/><path d="M4.500 1v14M1 4.500h14" stroke="#2f5a96" stroke-width="1.300"/></svg><svg class="dd" width="5" height="3"><use href="#dd"/></svg>
      <svg width="16" height="16" viewBox="0 0 16 16"><path d="M2.500 1.500h11q2 0 2 2v5q0 2-2 2H8l-4 5v-5H2.500q-2 0-2-2v-5q0-2 2-2z" fill="url(#blue)" stroke="#355f9b"/></svg><svg class="dd" width="5" height="3"><use href="#dd"/></svg>
      <svg width="16" height="16" viewBox="0 0 16 16"><path d="M8 .8l2.200 4.900 5.100.5-3.800 3.500 1 5.400L8 12.500l-4.500 2.600 1-5.400L.7 6.200l5.100-.5z" fill="url(#blue)" stroke="#355f9b"/></svg><svg class="dd" width="5" height="3"><use href="#dd"/></svg>
      <i class="sep"></i>
      <svg width="16" height="16" viewBox="0 0 16 16"><path d="M2.500 3.500l5 2 5-3.500-1.500 8.500-5 3.500z" fill="none" stroke="#111"/><path d="M1.500 2.500h2v2h-2zM6.500 4.500h2v2h-2zM11.500 1h2v2h-2zM10 9.500h2v2h-2zM5 13h2v2H5z" fill="#fff" stroke="#111"/></svg>
      <svg width="16" height="16" viewBox="0 0 16 16"><path d="M1 15.500L4.500 8l3.500 3z" fill="#333"/><path d="M4 8.500L9 3l4 3.500-5 5.500z" fill="#8a4a2a" stroke="#333"/><path d="M9 3.500L11.500.8 14 3l-1.500 3.500z" fill="#e8b03a" stroke="#333"/><path d="M6 6.500l4 3.500" stroke="#d94"/></svg>
      <i class="sep"></i>
      <svg width="16" height="16" viewBox="0 0 16 16"><path d="M6 2.500L8 .5l2 2" fill="none" stroke="#666"/><path d="M.8 2.800h14.400v12H.8z" fill="#d8942a" stroke="#8a5a0c" stroke-width="1.300"/><path d="M3 5h10v8H3z" fill="#fff" stroke="#a06a10"/><text x="4.500" y="12.500" class="g-fw">A</text></svg>
      <svg width="16" height="16" viewBox="0 0 16 16"><path d="M.6 1.600h14.800v12.800H.6z" fill="#eee" stroke="#888"/><path d="M3 4h10v8H3z" fill="url(#sky)" stroke="#555"/><path d="M9 12V9L6.500 7M9 9l2.500-2.500" stroke="#222" fill="none"/></svg>
      <svg width="16" height="16"><use href="#frame"/></svg>
      <i class="sep"></i>
      <svg width="16" height="16" viewBox="0 0 16 16"><rect x="3.500" y="1.500" width="12" height="13" rx="2" fill="#d0d0d0" stroke="#aaa"/><path d="M.5 9h3V6.500L8 11l-4.500 4.500V13h-3z" fill="#e8e8e8" stroke="#aaa"/></svg>
    </div>
    <footer class="l-status">
      <i></i>
      <svg width="15" height="13" viewBox="0 0 15 13"><path d="M4.500 4.500h9v7h-9z" fill="none" stroke="#333" stroke-dasharray="1 1"/><path d="M0 4.500h8M3.500 0v9" stroke="#22c" stroke-dasharray="3 1"/></svg>
      <span>-0.72 / -2.22</span>
      <svg width="15" height="13" viewBox="0 0 15 13"><path d="M5.500 4.500h8v7h-8z" fill="none" stroke="#333" stroke-dasharray="1 1"/><path d="M5 1.500h3M11 1.500h3M6.500 0v3M12.500 0v3M1.500 4v2M1.500 9v2M0 5h3M0 10h3" stroke="#222"/></svg>
      <span>0.00 x 0.00</span>
      <i></i>
      <svg width="11" height="12" viewBox="0 0 11 12"><path d="M10.500 4V.5H.5v11h8" fill="none" stroke="#aaa"/><path d="M3 6l3 3 4-5" fill="none" stroke="#999"/></svg>
      <i></i><i></i><span>Slide 1 / 1</span><i></i><span>Default</span><i></i>
      <svg width="13" height="13" viewBox="0 0 13 13"><path d="M6.500 1v11M1 6.500h11M4.500 3l2-2.200 2 2.200M4.500 10l2 2.200 2-2.200M3 4.500L.8 6.500 3 8.500M10 4.500l2.200 2-2.200 2" fill="none" stroke="#222" stroke-width="1.500"/></svg>
      <i></i>
      <svg width="126" height="14" viewBox="0 0 126 14"><path d="M0 7h8M117 7h8M121 3v8" stroke="#999" stroke-width="2"/><path d="M14 7h97M61.500 2v10" stroke="#9a9a9a" stroke-width="1.500"/><circle cx="42" cy="7" r="3.500" fill="#fff" stroke="#888"/></svg>
      <i></i>
    </footer>
  </div>
</section>
</div>
</body>
</html>
```
FILE: styles.css
```css
*{box-sizing:border-box}
body{margin:0;font:12px/16px "Open Sans","Noto Sans",sans-serif;letter-spacing:-.35px;color:#444;overflow:hidden;background:#fff}
svg{display:block;flex:none;overflow:visible}
.defs{position:absolute}
.desktop{display:flex;width:1916px;height:1037px}
i,em{font-style:normal}
span{white-space:nowrap}
.c-gray{color:#b5b5b5}
.c-lgray{color:#b8b8b8}

/* ---------- PowerPoint ---------- */
.ppt{width:959px;height:1037px;display:flex;flex-direction:column;background:#fff}
.p-title{height:28px;display:grid;grid-template-columns:239px 478px 1fr;align-items:center}
.p-quick{display:grid;grid-template-columns:30px 29px 22px 18px 28px 29px 6px;padding-left:10px;align-items:center}
.p-caption{text-align:center;color:#a9a9a9;padding-top:2px;letter-spacing:-.35px}
.p-winbtns{display:grid;grid-template-columns:31px 31px 29px 29px 10px;justify-content:end;padding-right:11px;align-items:center}
.p-winbtns .q{font-size:14px;color:#a8a8a8;margin-left:5px}
.p-tabs{height:25px;display:flex;align-items:stretch;border-bottom:1px solid #d5d5d5;line-height:25px}
.p-tabs .file{width:59px;background:#d24726;color:#fff;text-align:center;margin-bottom:-1px;letter-spacing:-.6px}
.p-tabs .home{width:62px;margin:0 0 -1px 4px;border:1px solid #d5d5d5;border-bottom:0;background:#fff;color:#d24726;text-align:center;line-height:23px;letter-spacing:-.6px}
.p-tablist{display:grid;grid-template-columns:67px 70px 102px 102px 96px 69px auto;padding-left:15px;flex:1;letter-spacing:-.6px}
.p-tablist .wide{letter-spacing:-.4px}
.p-tablist .wider{letter-spacing:-.05px}
.signin{margin-right:7px;letter-spacing:-.15px;line-height:23px}
.ribbon{height:93px;display:flex;border-bottom:1px solid #d5d5d5}
.grp{position:relative;height:85px;margin-top:3px;border-right:1px solid #dcdcdc;display:flex;flex-direction:column}
.g-clip{width:86px}.g-slides{width:127px}.g-font{width:228px}.g-para{width:195px}.g-draw{width:176px}.g-edit{width:91px}
.body{display:flex;height:71px}
.grp>.body,.grp>.rows,.grp>.smalls{height:71px;flex:none}
.grp footer{height:14px;flex:none;line-height:14px;display:flex;justify-content:center;color:#666;margin-top:3px;letter-spacing:-.1px}
.launch{position:absolute;right:3px;bottom:0;color:#777}
.launch.c-lgray{color:#b8b8b8}
.g-clip footer{padding-right:16px}.g-font footer{padding-right:17px}.g-para footer{padding-right:17px}.g-draw footer{padding-right:19px}
.g-clip .launch{right:4px}
.big{display:flex;flex-direction:column;align-items:center;width:50px;padding-top:5px;color:#444;letter-spacing:-.1px}
.big span{margin-top:3px}
.big>.dd{margin-top:6px}
.big .ddl{margin-top:0;display:flex;align-items:center;gap:3px}
.dd{color:#666}
.smalls>div{height:23px;display:grid;align-items:center}
.g-clip .big{width:49px;padding-left:2px}
.g-clip .smalls>div{grid-template-columns:23px 5px}
.g-slides .big{width:48px}
.lab>div{grid-template-columns:19px auto auto;justify-content:start;color:#444;letter-spacing:-.25px}
.lab>div .dd{margin-left:6px}
.off{color:#999}.off .dd,.dis .dd,.g-font .dd,.g-para .dd{color:#b5b5b5}
.frow1{display:grid;grid-template-columns:104px 46px 23px 19px 9px 18px;align-items:center;height:23px;margin:0 0 8px 4px}
.rows{padding-top:8px}
.pcombo{height:23px;border:1px solid #dcdcdc;background:#fdfdfd;display:flex;justify-content:flex-end;align-items:center;padding-right:4px}
.pcombo+.pcombo{width:40px;margin-left:-1px}
.vs{width:1px;height:22px;background:#dcdcdc;display:block}
.frow2{display:grid;grid-template-columns:22px 22px 22px 24px 21px 22px 9px 25px 7px 14px 18px 16px;align-items:center;justify-items:center;height:22px;margin-left:3px;color:#a5a5a5;font-size:13px;letter-spacing:0}
.frow2 em{font:italic 14px "Liberation Serif",serif}
.frow2 .u{text-decoration:underline}
.frow2 .sh{text-shadow:1px 1px 2px #aaa}
.frow2 .st{text-decoration:line-through;font-size:11px;letter-spacing:-.4px}
.frow2 .fa{font-size:15px;font-weight:600}
.g-para .rows{width:159px}
.prow1{display:grid;grid-template-columns:22px 12px 21px 15px 22px 26px 20px 5px;align-items:center;height:23px;margin:0 0 8px 8px}
.prow2{display:grid;grid-template-columns:22px 22px 22px 21px 23px 9px 19px 5px;align-items:center;height:22px;margin-left:8px}
.dis>div{grid-template-columns:20px 5px}
.g-draw .big{width:46px;padding-left:0;letter-spacing:-.45px}
.g-draw .big+.big{width:45px;padding-left:0}
.g-draw .big.off{width:45px;margin-right:2px;letter-spacing:-.15px}
.g-draw .dis>div{grid-template-columns:22px 5px}
.g-edit .lab{padding-left:6px}
.g-edit .lab .far{margin-left:9px}
.fold{margin:81px 0 0 36px}
.p-work{height:870px;display:flex;background:linear-gradient(#fff 0%,#fdfdfd 20%,#efefef 100%)}
.p-thumbs{width:194px;margin:2px 2px 3px 0;border-right:1px solid #d3d3d3;display:flex;align-items:flex-start;padding:14px 0 0 12px;color:#e0563a;font-size:15px;line-height:17px}
.p-thumb{width:149px;height:87px;border:3px solid #f0724f;background:#fff;margin-left:4px}
.p-stage{flex:1;margin-bottom:2px;border-bottom:1px solid #d3d3d3;padding:229px 0 0 12px}
.p-slide{width:722px;height:407px;border:1px solid #c6c6c6;background:#fff;padding:66px 89px 0 90px;color:#000;font-family:Lato,"Open Sans",sans-serif;text-align:center;font-variant-ligatures:none}
.ph{border:1px dotted #555}
.p-h{height:143px;font-weight:300;font-size:41.5px;line-height:48px;padding-top:87px;letter-spacing:-.05px}
.p-s{height:100px;margin-top:3px;font-size:16px;line-height:22px;letter-spacing:.15px}
.p-status{height:21px;background:#d24726;color:#fff;display:grid;grid-template-columns:83px 341px 17px 54px 16px 80px 50px 38px 38px 30px 138px 35px 13px;align-items:center;padding-left:7px;letter-spacing:-.85px;line-height:20px}
.p-status .t1{letter-spacing:-.5px}
.p-status .t2{letter-spacing:-.8px}
.p-status .t4{letter-spacing:-.9px}
.act{background:#b83b1d;width:38px;height:21px;display:flex;align-items:center;justify-content:center}
.p-status .t5{letter-spacing:-.6px}
.g-p{font:bold 12px "Open Sans",sans-serif;fill:#fff}
.g-a16{font:600 15px "Open Sans",sans-serif;fill:#a9a9a9}
.g-a13{font:600 12px "Open Sans",sans-serif;fill:#a9a9a9}
.g-a11{font:600 10px "Open Sans",sans-serif;fill:#a9a9a9}
.g-av{font:600 10.5px "Open Sans",sans-serif;fill:#a9a9a9}
.g-n{font:7px "Open Sans",sans-serif;fill:#999}
.g-ab{font:600 10px "Open Sans",sans-serif;fill:#444}

/* ---------- Impress ---------- */
.lo{width:957px;height:1037px;border-left:1px solid #25222c;background:linear-gradient(90deg,transparent 0 1px,rgba(255,255,255,.45) 1px 2px,transparent 2px),linear-gradient(#8c7b96 0,#85748f 6%,#5f4f70 12%,#5f4f70 25%,#a18db0 31%,#9c8aae 93%,#3c3658 96%,#343552 100%);display:flex;flex-direction:column;color:#000;box-shadow:-1px 0 3px rgba(0,0,0,.45);z-index:1}
.l-title{height:28px;display:flex;align-items:flex-start;padding:5px 0 0 8px;border-top:1px solid #3c3944;background:radial-gradient(ellipse 120px 18px at 100px 12px,rgba(205,196,212,.8) 30%,transparent),radial-gradient(circle 9px at 163px 26px,#6b7fcb,transparent),radial-gradient(circle 9px at 298px 25px,#d3bfe6,transparent),radial-gradient(circle 9px at 433px 25px,#d3bfe6,transparent),radial-gradient(circle 9px at 567px 25px,#d3bfe6,transparent),radial-gradient(circle 11px at 702px 24px,#8fae62,transparent),radial-gradient(ellipse 72px 14px at 755px 28px,#3c4260 75%,transparent),linear-gradient(#9888a3,#83728d 20%,#83728d)}
.l-title>span{margin-left:4px;line-height:15px;letter-spacing:-.25px}
.l-btns{margin:-6px 3px 0 auto;height:19px;width:104px;display:grid;grid-template-columns:29px 27px 48px;border:1px solid #c3b9cb;border-top:0;border-radius:0 0 5px 5px;background:rgba(150,140,160,.5)}
.l-btns i{display:flex;align-items:center;justify-content:center;border-left:1px solid #c3b9cb}
.l-btns i:first-child{border-left:0;align-items:flex-end;padding-bottom:5px}
.client{margin:0 4px 0 6px;border:1px solid #3a3344;height:1005px;display:flex;flex-direction:column;background:#f0f0f0;box-shadow:0 0 0 1px rgba(220,210,230,.5);overflow:hidden}
.l-top{height:89px;flex:none;background:linear-gradient(#fff,#fcfcfc 35%,#efefef);border-bottom:2px solid #a0a0a0}
.l-menu{height:28px;display:grid;grid-template-columns:30px 32px 36px 42px 50px 41px 69px 56px 1fr 16px;padding:0 1px 0 6px;align-items:center;letter-spacing:-.4px}
.l-menu u{text-underline-offset:2px}
.l-menu svg{margin-bottom:2px}
.tb{display:grid;align-items:center;padding-left:3px;color:#111}
.tb .dd{color:#111}
.tb .dd.c-mid{color:#999}
.tb1{height:28px;grid-template-columns:12px 23px 13px 23px 14px 25px 24px 9px 24px 9px 25px 24px 9px 21px 28px 9px 25px 25px 26px 24px 8px 23px 13px 23px 12px 9px 24px 24px 13px 24px 9px 24px 9px 23px 25px 12px 9px 29px 11px 24px 12px 24px 13px 24px 9px 16px}
.tb2{height:31px;padding-top:3px;grid-template-columns:13px 24px 9px 25px 23px 17px 90px 80px 24px 12px 9px 29px 76px 129px 24px 9px 25px 23px 12px 24px 12px 10px 16px}
.tb3{height:32px;flex:none;padding-bottom:1px;border-top:2px solid #a6a6a6;border-bottom:1px solid #a6a6a6;grid-template-columns:9px 28px 9px 25px 25px 25px 25px 25px 24px 9px 23px 12px 24px 12px 24px 12px 24px 12px 24px 12px 24px 12px 24px 12px 24px 12px 9px 26px 23px 9px 25px 25px 24px 9px 16px}
.grip{width:2px;height:18px;background:repeating-linear-gradient(#777 0 2px,transparent 2px 4px)}
.sep{width:1px;height:15px;background:#b9b9b9}
.pressed{width:25px;height:25px;border:1px solid #777;border-radius:4px;background:linear-gradient(#c9c9c9,#ececec);display:flex;align-items:center;justify-content:center}
.combo{height:23px;border:1px solid #7b7b83;border-right-width:2px;border-bottom-width:2px;background:#fff;display:flex;align-items:center;padding-left:2px;line-height:18px;letter-spacing:-.25px;overflow:hidden}
.combo em{width:17px;height:20px;flex:none;margin-left:auto;border:1px solid #777;background:linear-gradient(#f4f4f4,#d4d4d4);display:flex;align-items:center;justify-content:center}
.w82{width:82px}.w76{width:76px}.w114{width:114px}
.ln{width:60px;height:1px;background:#000}
.swatch{width:31px;height:13px;background:#729fcf;border:1px solid #444;margin:0 5px 0 1px;flex:none}
.w114 span{width:57px;letter-spacing:-.6px}
.spin{width:69px;height:22px;border:1px solid #a9a9b5;background:#fff;display:flex;align-items:center;justify-content:space-between;padding:0 2px 0 3px;letter-spacing:-.1px}
.spin em{width:15px;height:17px;border:1px solid #bbb;background:linear-gradient(#eee 48%,#bbb 48% 54%,#eee 54%);display:flex;flex-direction:column;align-items:center;justify-content:space-around}
.l-mid{height:860px;flex:none;display:flex}
.l-slides{width:208px;border-right:1px solid #a0a0a0;border-bottom:1px solid #a0a0a0;display:flex;flex-direction:column}
.l-slides header{height:29px;display:flex;align-items:center;justify-content:space-between;padding:2px 6px 0 3px;letter-spacing:-.45px}
.l-list{flex:1;margin:0 3px 0 2px;border:1px solid #a0a0a0;border-right-color:#f0f0f0;background:#fff;padding:8px 0 0 8px}
.l-thumb{width:183px;height:124px;border:1px solid #4f7ba6;background:linear-gradient(#8faecd 20%,#a3c4e4 75%);display:flex;padding:4px 0 0 13px;color:#444;line-height:12px;font-size:12px}
.l-thumb span{width:12px;font-family:"DejaVu Sans","Open Sans",sans-serif}
.page{width:152px;height:114px;background:#fff;box-shadow:0 0 3px 1px #666}
.split{width:5px;display:flex;align-items:center;justify-content:flex-start;background:#f8f8f8;border-right:1px solid #a0a0a0;margin-bottom:1px}
.split.right{width:6px;border-left:1px solid #a0a0a0;padding-left:1px}
.l-center{width:686px;border-left:1px solid #fff;display:grid;grid-template:28px 816px 16px/668px 17px}
.l-tabs{grid-column:1/3;display:grid;grid-template-columns:50px 43px 37px 53px 65px;align-items:start;padding:6px 0 0 4px;letter-spacing:-.35px}
.l-tabs span{height:19px;line-height:18px;border:1px solid #8c8c98;border-bottom:0;border-right-width:2px;background:linear-gradient(#f2f2f2,#d6d6d6);text-align:center}
.l-tabs .on{height:24px;margin-top:-2px;line-height:22px;background:#fff;border-right-width:1px}
.l-canvas{background:#a9a9a9;padding:165px 0 0 11px}
.l-slide{width:645px;height:483px;background:#fff;box-shadow:1px 1px 6px 1px #555;padding:18px 32px;text-align:center;font-family:"Liberation Sans",Arial,sans-serif;letter-spacing:0}
.lh{height:82px;border:1px dashed #c9c9c9;font-size:35.8px;line-height:80px}
.lt{height:281px;margin-top:13px;border:1px dashed #c9c9c9;font-size:26.1px;line-height:279px}
.vsb{background:#eee;display:grid;grid-template-rows:81px 656px 79px;justify-items:center;border-left:1px solid #fff}
.vsb>svg{margin-top:6px}
.vsb i{width:15px;border:1px solid #989898;border-radius:2px;background:linear-gradient(90deg,#f8f8f8,#e9e9e9 50%,#cfcfd3 55%,#c4c4c8);display:flex;align-items:center;justify-content:center}
.vsb>.end{margin-top:68px}
.hsb{background:#eee;display:grid;grid-template-columns:225px 217px 226px;align-items:center}
.hsb>svg{margin-left:5px}
.hsb i{height:15px;border:1px solid #989898;border-radius:2px;background:linear-gradient(#f8f8f8,#e9e9e9 50%,#d3d3d6 55%,#c8c8cc);display:flex;align-items:center;justify-content:center}
.hsb>.end{margin-left:215px}
.l-deck{width:39px;flex:none;border-bottom:1px solid #a0a0a0;padding-right:1px;display:grid;grid-template-rows:39px 38px 35px 34px 35px 36px 34px 35px;justify-items:center;align-items:center}
.dbtn{width:32px;height:32px;border:1px solid #b5b5b5;border-radius:4px;display:flex;align-items:center;justify-content:center}
.l-status{flex:1;display:grid;grid-template-columns:11px 20px 183px 19px 181px 7px 14px 29px 9px 56px 8px 43px 6px 16px 10px 132px 1px;padding:1px 0 0 198px;align-items:center;letter-spacing:-.4px;white-space:nowrap}
.l-status i{width:1px;height:16px;background:#a0a0a0}
.g-pdf{font:bold 6.5px "Open Sans",sans-serif;fill:#222}
.g-abc{font:bold 12px "Open Sans",sans-serif;fill:#555;stroke:#333;stroke-width:.7px;letter-spacing:-.5px}
.g-t{font:bold 20px "Liberation Serif",serif;fill:#555}
.g-fw{font:bold 9px "Liberation Serif",serif;fill:#a12}
```
